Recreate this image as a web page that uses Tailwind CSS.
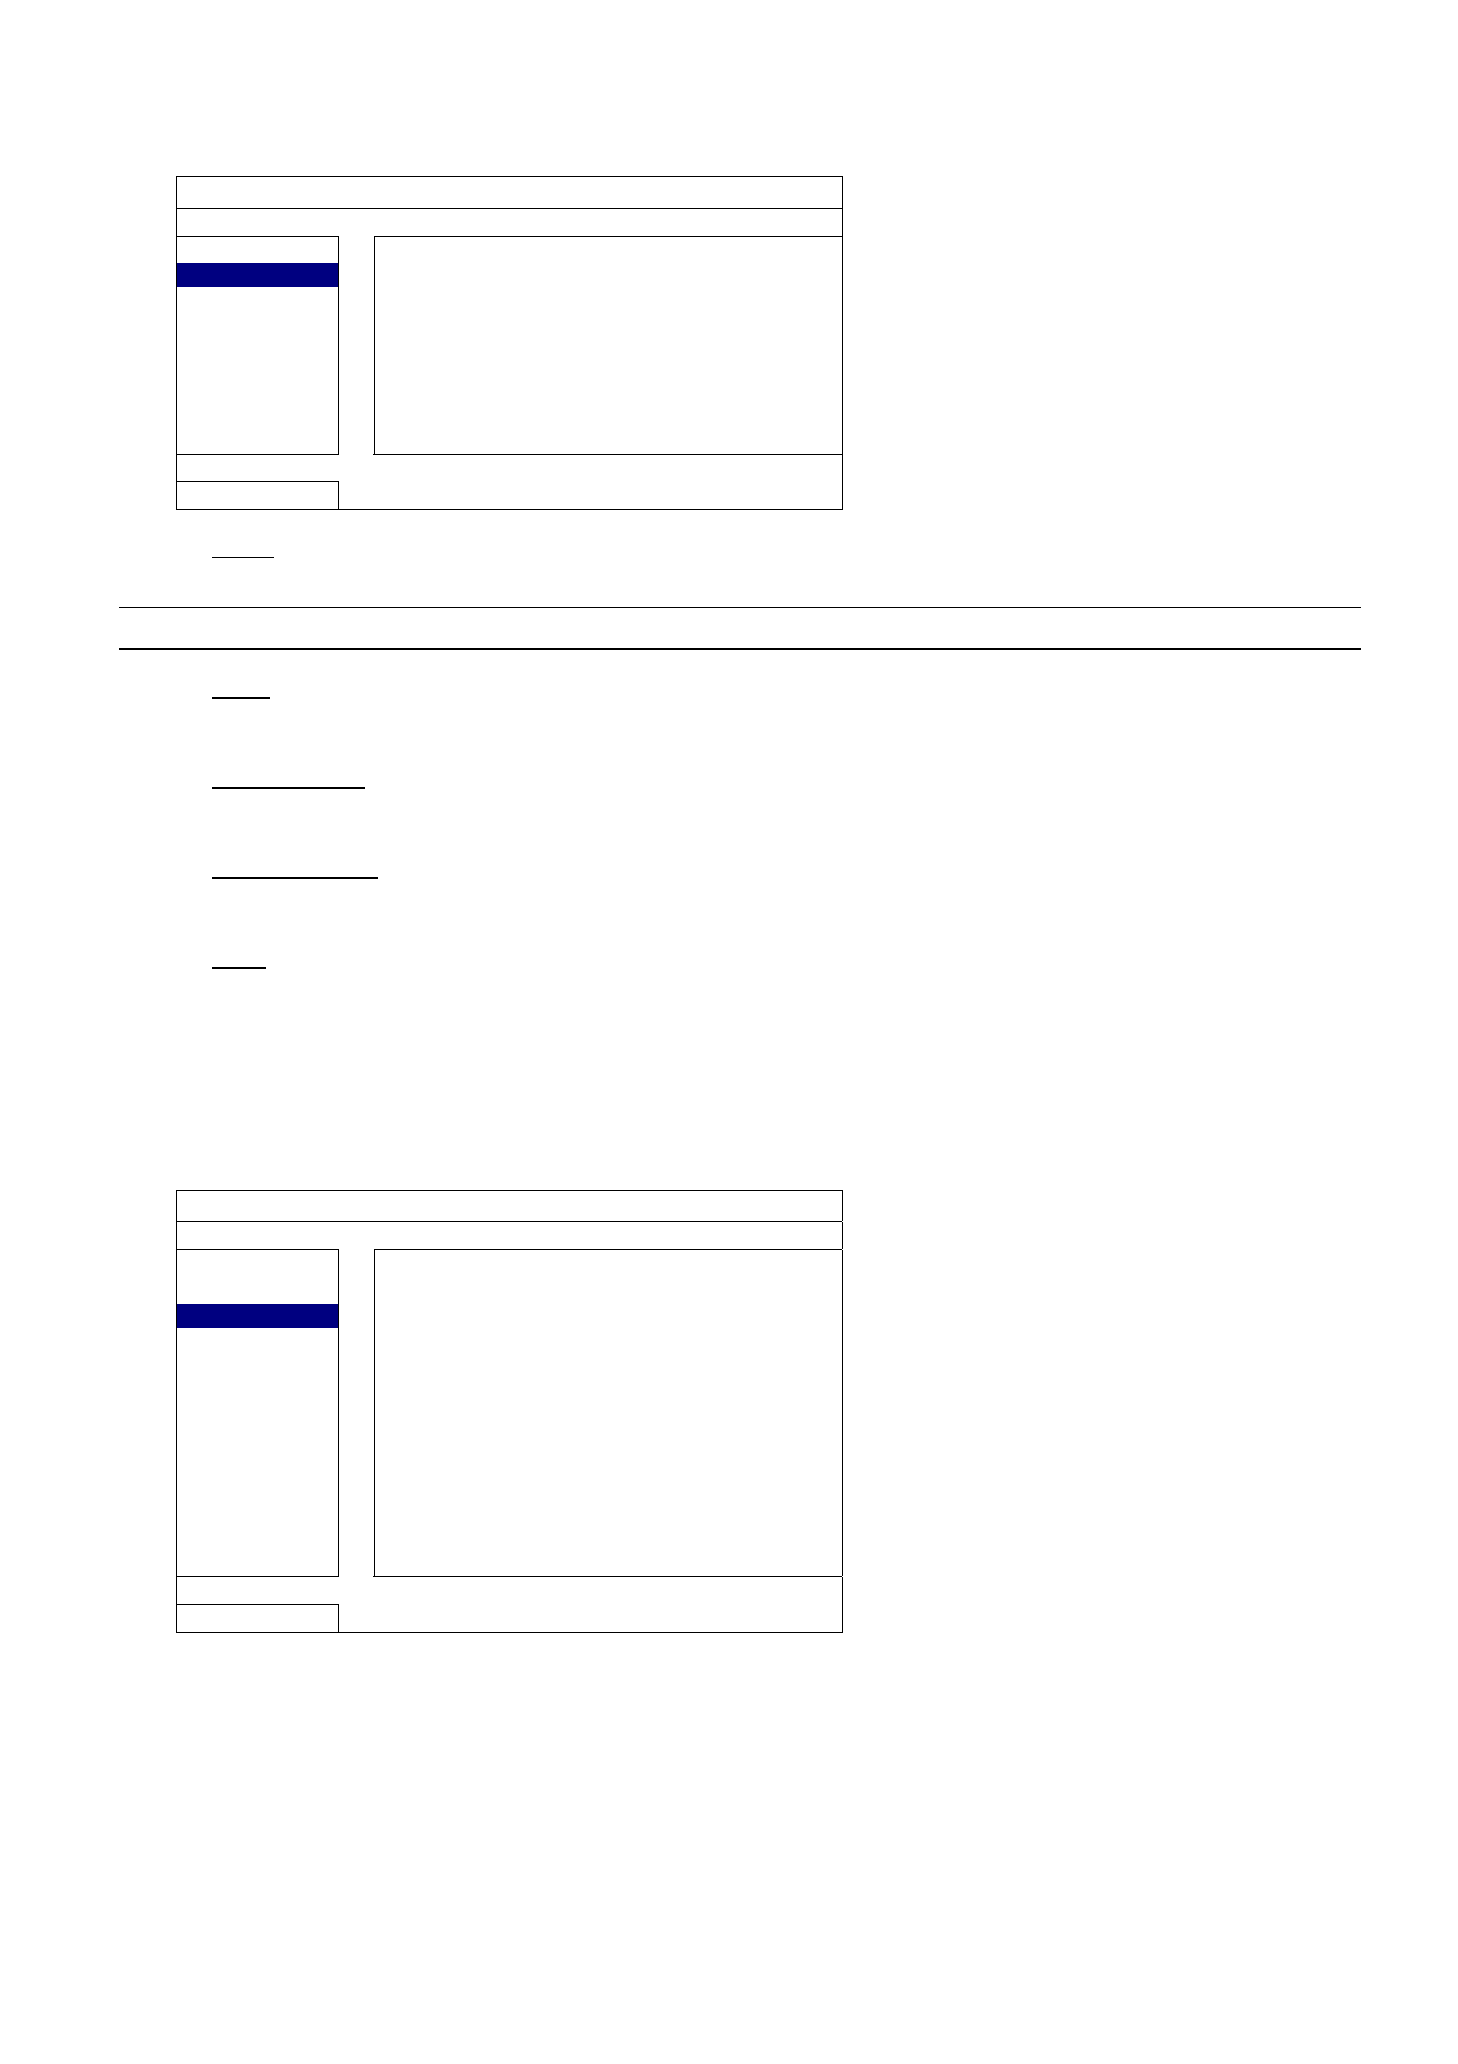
<!DOCTYPE html>
<html lang="en">
<head>
<meta charset="utf-8">
<meta name="viewport" content="width=device-width, initial-scale=1">
<title>Manual page</title>
<script src="https://cdn.jsdelivr.net/npm/@tailwindcss/browser@4"></script>
</head>
<body class="bg-white text-black">
<main class="min-h-screen pt-44 pr-[97px] pb-24 pl-[119px]">

  <!-- First window outline -->
  <section class="ml-[57px] max-w-[667px] border border-black">
    <div class="h-8 border-b border-black"></div>
    <div class="flex h-[219px] mt-[27px]">
      <div class="w-[162px] shrink-0 border-t border-r border-b border-black pt-[26px]">
        <div class="h-6 bg-[#000080]"></div>
      </div>
      <div class="ml-[34px] flex grow border-b border-black pl-px">
        <div class="grow border-t border-l border-black"></div>
      </div>
    </div>
    <div class="mt-[26px] h-7 w-[162px] border-t border-r border-black"></div>
  </section>

  <div class="mt-[47px] ml-[93px] h-px w-[62px] bg-black"></div>

  <!-- Note band -->
  <section class="mt-[49px] h-[43px] border-t border-b-2 border-black"></section>

  <!-- Underlined headings -->
  <section class="mt-[47px] ml-[93px] flex flex-col gap-[88px]">
    <div class="h-[2px] w-[58px] bg-black"></div>
    <div class="h-[2px] w-[153px] bg-black"></div>
    <div class="h-[2px] w-[166px] bg-black"></div>
    <div class="h-[2px] w-[54px] bg-black"></div>
  </section>

  <!-- Second window outline; its right edge breaks at each divider -->
  <section class="mt-[221px] ml-[57px] max-w-[667px] border-t border-b border-l border-black">
    <div class="h-[30px] border-r border-black"></div>
    <div class="mr-px h-px bg-black"></div>
    <div class="h-[27px] border-r border-black"></div>
    <div class="flex h-[328px]">
      <div class="w-[162px] shrink-0 border-t border-r border-b border-black pt-[54px]">
        <div class="h-6 bg-[#000080]"></div>
      </div>
      <div class="ml-[34px] flex grow flex-col">
        <div class="mr-px ml-px h-px bg-black"></div>
        <div class="ml-px grow border-r border-l border-black"></div>
        <div class="mr-px h-px bg-black"></div>
      </div>
    </div>
    <div class="border-r border-black pt-[27px]">
      <div class="h-7 w-[162px] border-t border-r border-black"></div>
    </div>
  </section>

</main>
</body>
</html>
